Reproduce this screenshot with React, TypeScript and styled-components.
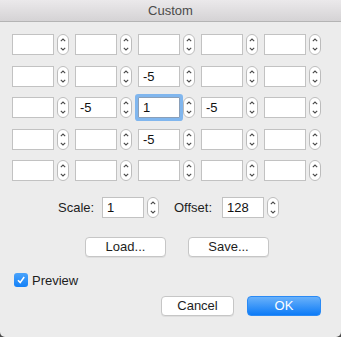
import styled, { createGlobalStyle } from "styled-components";

const GlobalStyle = createGlobalStyle`
    html, body {
        margin: 0;
        padding: 0;
        background: #4a4a4a;
    }
    body {
        font-family: "Liberation Sans", Arial, sans-serif;
        font-size: 13px;
        color: #1d1d1d;
    }
`

const Window = styled.div`
    width: 341px;
    height: 337px;
    background: #ececec;
    border-radius: 0 0 5px 5px;
    overflow: hidden;
    display: flex;
    flex-direction: column;
`

const TitleBar = styled.div`
    height: 21px;
    border-bottom: 1px solid #b4b4b4;
    background: linear-gradient(#ebe9eb, #d5d3d5);
    display: flex;
    align-items: center;
    justify-content: center;
    color: #4b4b4b;
    font-size: 13px;
`

const Body = styled.div`
    padding: 12px 20px 0 12px;
    display: flex;
    flex-direction: column;
`

const Grid = styled.div`
    display: grid;
    grid-template-columns: repeat(5, 57px);
    column-gap: 6px;
    row-gap: 10.5px;
`

const Cell = styled.div`
    display: flex;
    align-items: center;
    gap: 3px;
`

const Field = styled.div<{ $focused?: boolean }>`
    box-sizing: border-box;
    width: 42px;
    height: 21px;
    background: #fff;
    border: 1px solid ${p => (p.$focused ? "#8a9fb8" : "#c2c2c2")};
    padding: 0 4px;
    display: flex;
    align-items: center;
    font-size: 13px;
    color: #111;
    ${p => p.$focused && "box-shadow: 0 0 0 3px #80b6ee; border-radius: 1px;"}
`

const ScaleRow = styled.div`
    margin-top: 15.5px;
    display: flex;
    align-items: center;
    padding-left: 46px;
`

const Label = styled.span<{ $width: number }>`
    font-size: 13px;
    width: ${p => p.$width}px;
`

const ScaleGroup = styled.div`
    display: flex;
    align-items: center;
    gap: 3px;
    margin-right: 15px;

    &:last-child {
        margin-right: 0;
    }
`

const ButtonRow = styled.div<{ $align: string; $gap: number }>`
    display: flex;
    justify-content: ${p => p.$align};
    gap: ${p => p.$gap}px;
`

const LoadRow = styled(ButtonRow)`
    margin-top: 19px;
    padding-left: 73px;
`

const FooterRow = styled(ButtonRow)`
    margin-top: 8px;
`

const PushButton = styled.div<{ $primary?: boolean; $width: number }>`
    box-sizing: border-box;
    width: ${p => p.$width}px;
    height: 20px;
    border-radius: 4px;
    display: flex;
    align-items: center;
    justify-content: center;
    font-size: 13px;
    ${p =>
        p.$primary
            ? `
        background: linear-gradient(#69b1fa, #0d7bf7);
        color: #fff;
        border: 1px solid #2a8af5;
    `
            : `
        background: #fff;
        color: #1d1d1d;
        border: 1px solid #c6c6c6;
        box-shadow: 0 1px 0 rgba(0,0,0,0.06);
    `}
`

const CheckRow = styled.label`
    margin-top: 16px;
    margin-left: 2px;
    display: flex;
    align-items: center;
    gap: 4px;
    font-size: 13px;
`

const CheckBox = styled.span`
    width: 14px;
    height: 14px;
    border-radius: 3px;
    background: linear-gradient(#4aa3fb, #1380f7);
    display: flex;
    align-items: center;
    justify-content: center;
`

const Stepper = () => (
    <svg width="12" height="21" viewBox="0 0 12 21">
        <rect x="0.5" y="0.5" width="11" height="20" rx="5.5" fill="#fff" stroke="#bcbcbc" />
        <path d="M3.8 7.2 L6 5 L8.2 7.2" fill="none" stroke="#4a4a4a" strokeWidth="1.1" />
        <path d="M3.8 13.8 L6 16 L8.2 13.8" fill="none" stroke="#4a4a4a" strokeWidth="1.1" />
    </svg>
)

const values: string[][] = [
    ["", "", "", "", ""],
    ["", "", "-5", "", ""],
    ["", "-5", "1", "-5", ""],
    ["", "", "-5", "", ""],
    ["", "", "", "", ""],
]

const App = () => {
    return (
        <>
            <GlobalStyle />
            <Window>
                <TitleBar>Custom</TitleBar>
                <Body>
                    <Grid>
                        {values.map((row, r) =>
                            row.map((v, c) => (
                                <Cell key={`${r}-${c}`}>
                                    <Field $focused={r === 2 && c === 2}>{v}</Field>
                                    <Stepper />
                                </Cell>
                            ))
                        )}
                    </Grid>
                    <ScaleRow>
                        <ScaleGroup>
                            <Label $width={41}>Scale:</Label>
                            <Field>1</Field>
                            <Stepper />
                        </ScaleGroup>
                        <ScaleGroup>
                            <Label $width={45}>Offset:</Label>
                            <Field>128</Field>
                            <Stepper />
                        </ScaleGroup>
                    </ScaleRow>
                    <LoadRow $align="flex-start" $gap={22}>
                        <PushButton $width={81}>Load...</PushButton>
                        <PushButton $width={81}>Save...</PushButton>
                    </LoadRow>
                    <CheckRow>
                        <CheckBox>
                            <svg width="10" height="10" viewBox="0 0 10 10">
                                <path d="M2 5.2 L4.2 7.6 L8.2 2" fill="none" stroke="#fff" strokeWidth="1.6" />
                            </svg>
                        </CheckBox>
                        Preview
                    </CheckRow>
                    <FooterRow $align="flex-end" $gap={13}>
                        <PushButton $width={73}>Cancel</PushButton>
                        <PushButton $primary $width={74}>OK</PushButton>
                    </FooterRow>
                </Body>
            </Window>
        </>
    )
}

export default App
